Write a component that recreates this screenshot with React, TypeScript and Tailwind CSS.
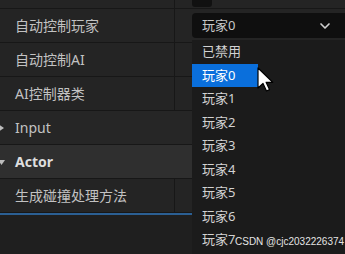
import { ChevronDown } from "lucide-react";

const font = { fontFamily: '"Noto Sans", "Noto Sans CJK SC", sans-serif' };

const PropRow = ({ label, children }: { label: string; children?: React.ReactNode }) => (
  <div className="flex h-[34px] border-b border-[#171717] bg-[#242424]">
    <div className="flex w-[175px] items-center border-r border-[#171717] pl-[15px] text-[14px] text-[#c2c2c2]">
      {label}
    </div>
    <div className="flex flex-1 items-center pl-[17px]">{children}</div>
  </div>
);

const Category = ({ label, open, bold }: { label: string; open?: boolean; bold?: boolean }) => (
  <div
    className={`flex h-[34px] items-center border-b border-[#171717] ${
      open ? "bg-[#2f2f2f]" : "bg-[#262626]"
    }`}
  >
    <svg width="8" height="8" viewBox="0 0 8 8" className="ml-[-2px] mr-[9px] text-[#bdbdbd]">
      {open ? <path d="M0 2h7L3.5 7z" fill="currentColor" /> : <path d="M1 0.5v7l5-3.5z" fill="currentColor" />}
    </svg>
    <span className={`text-[14px] ${bold ? "font-bold text-[#dedede]" : "text-[#c2c2c2]"}`}>{label}</span>
  </div>
);

const items = ["已禁用", "玩家0", "玩家1", "玩家2", "玩家3", "玩家4", "玩家5", "玩家6", "玩家7"];

export default function App() {
  return (
    <div className="relative h-[254px] w-[345px] overflow-hidden bg-[#1f1f1f]" style={font}>
      {/* top partial row */}
      <div className="flex h-[9px] border-b border-[#171717] bg-[#242424]">
        <div className="w-[175px] border-r border-[#171717]" />
        <div className="pl-[17px]">
          <div className="h-[7px] w-[20px] rounded-b-[3px] bg-[#111111]" />
        </div>
      </div>

      <PropRow label="自动控制玩家">
        <div className="flex h-[25px] w-full items-center justify-between rounded-l-[4px] bg-[#0f0f0f] pl-[10px] pr-[12px] text-[13px] text-[#c8c8c8]">
          <span>玩家0</span>
          <ChevronDown size={16} strokeWidth={2.5} className="text-[#d0d0d0]" />
        </div>
      </PropRow>
      <PropRow label="自动控制AI" />
      <PropRow label="AI控制器类" />
      <Category label="Input" />
      <Category label="Actor" open bold />
      <PropRow label="生成碰撞处理方法" />
      <div className="h-[2px] bg-[#2b5f93]" />

      {/* dropdown popup */}
      <div className="absolute left-[192px] top-[40px] h-[214px] w-[153px] bg-[#1b1b1b] text-[13px] text-[#d2d2d2]">
        {items.map((it, i) => (
          <div
            key={it}
            className={`flex h-[23.5px] w-[66px] items-center pl-[10px] ${
              i === 1 ? "bg-[#0a6fdc] text-white" : ""
            }`}
          >
            {it}
          </div>
        ))}
      </div>

      {/* mouse cursor */}
      <svg className="absolute left-[257px] top-[67px]" width="17" height="26" viewBox="0 0 17 26">
        <path
          d="M1 1v20l5-4.5 3.5 7.5 3-1.4-3.4-7.3h6.6z"
          fill="#ffffff"
          stroke="#000000"
          strokeWidth="1.2"
          strokeLinejoin="round"
        />
      </svg>

      {/* watermark */}
      <div
        className="absolute left-[235px] top-[234px] whitespace-nowrap text-[10px] text-[#e4e4e4]"
        style={{ fontFamily: '"Liberation Sans", Arial, sans-serif' }}
      >
        CSDN @cjc2032226374
      </div>
    </div>
  );
}
